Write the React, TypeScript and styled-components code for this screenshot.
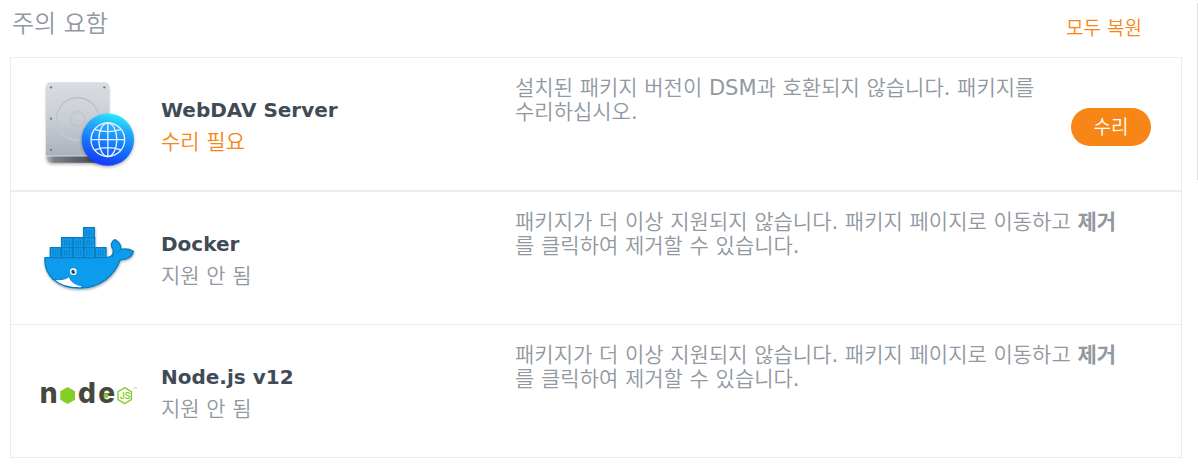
import React from "react";
import styled, { createGlobalStyle } from "styled-components";

const GlobalStyle = createGlobalStyle`
  *, *::before, *::after { box-sizing: border-box; }
  body {
    margin: 0;
    background: #fff;
    color: #91989f;
    font-family: "DejaVu Sans", "Noto Sans CJK KR DemiLight", "Noto Sans CJK KR", sans-serif;
    font-size: 21px;
    line-height: 24px;
    font-weight: 400;
  }
`;

const Page = styled.main`
  display: flex;
  align-items: flex-start;
  justify-content: space-between;
`;

const Content = styled.section`
  flex: 1;
  min-width: 0;
  padding: 8px 15px 13px 10px;
`;

const ScrollThumb = styled.div`
  flex: none;
  width: 1px;
  height: 177px;
  margin-top: 3px;
  background: #dcdfe2;
`;

const Header = styled.header`
  display: flex;
  align-items: center;
  justify-content: space-between;
  padding: 0 40px 17px 2px;
`;

const Heading = styled.h1`
  margin: 0;
  font-size: 24px;
  line-height: 32px;
  font-weight: 400;
`;

const RestoreAll = styled.button`
  margin: 7px 0 0;
  padding: 0;
  border: 0;
  background: none;
  color: #f78616;
  font-family: inherit;
  font-size: 19px;
  line-height: 24px;
  cursor: pointer;
`;

const List = styled.ul`
  margin: 0;
  padding: 0;
  list-style: none;
  border: 1px solid #e9ebec;
  border-bottom: 0;
`;

const Row = styled.li<{ $separated?: boolean }>`
  display: flex;
  gap: 24px;
  padding: 18px 30px;
  border-bottom: ${(p) => (p.$separated ? "2px solid #e8edf1" : "1px solid #e9ebec")};
`;

const IconBox = styled.div`
  flex: none;
  width: 96px;
  height: 96px;
  svg { display: block; width: 100%; height: 100%; }
`;

const Summary = styled.div`
  flex: 0 1 330px;
  min-width: 180px;
  align-self: center;
  display: flex;
  flex-direction: column;
  gap: 8px;
  padding-top: 4px;
`;

const Name = styled.h2`
  margin: 0;
  color: #414b55;
  font-size: 20px;
  line-height: 24px;
  font-weight: 700;
`;

const Status = styled.span<{ $alert?: boolean }>`
  color: ${(p) => (p.$alert ? "#f78616" : "inherit")};
`;

const Description = styled.p`
  flex: 1;
  min-width: 0;
  max-width: 620px;
  margin: 0;
`;

const Strong = styled.strong`
  font-family: "Noto Sans CJK KR", sans-serif;
  font-weight: 700;
  line-height: 1;
`;

const RepairButton = styled.button`
  flex: none;
  align-self: center;
  width: 80px;
  height: 38px;
  margin-top: 6px;
  padding: 0;
  border: 0;
  border-radius: 19px;
  background: #f78616;
  color: #fff;
  font-family: inherit;
  font-size: 19px;
  line-height: 24px;
  cursor: pointer;
`;

const WebDavIcon = () => (
  <svg viewBox="33 18 288 288" aria-hidden="true">
    <defs>
      <linearGradient id="plate" x1="0" y1="0" x2="0" y2="1">
        <stop offset="0" stopColor="#d9dde2" />
        <stop offset="0.5" stopColor="#c9ced4" />
        <stop offset="1" stopColor="#a9b1ba" />
      </linearGradient>
      <linearGradient id="edge" x1="0" y1="0" x2="1" y2="0">
        <stop offset="0" stopColor="#b4b9bf" />
        <stop offset="0.12" stopColor="#7b8086" />
        <stop offset="0.6" stopColor="#55595f" />
        <stop offset="1" stopColor="#2b2e33" />
      </linearGradient>
      <linearGradient id="ring" x1="0" y1="0" x2="0" y2="1">
        <stop offset="0" stopColor="#a4a9af" />
        <stop offset="1" stopColor="#d3d8dd" />
      </linearGradient>
      <linearGradient id="globe" x1="0.65" y1="0" x2="0.4" y2="1">
        <stop offset="0" stopColor="#25f0fd" />
        <stop offset="0.25" stopColor="#25b0fb" />
        <stop offset="0.6" stopColor="#1677fb" />
        <stop offset="1" stopColor="#1436fa" />
      </linearGradient>
      <filter id="soft" x="-20%" y="-20%" width="140%" height="140%">
        <feDropShadow dx="0" dy="4" stdDeviation="4" floodColor="#20262c" floodOpacity="0.4" />
      </filter>
    </defs>
    <rect x="50" y="40" width="186" height="238" rx="15" fill="url(#edge)" filter="url(#soft)" />
    <path d="M63 37H223Q238 37 238 52V258H48V52Q48 37 63 37Z" fill="url(#plate)" />
    <path d="M48 258H238" stroke="#d6dade" strokeWidth="3" />
    <circle cx="143" cy="147" r="64" fill="none" stroke="url(#ring)" strokeWidth="2.5" />
    <circle cx="143" cy="147" r="22" fill="none" stroke="#b3b9bf" strokeWidth="2" />
    <g fill="#7b8187">
      <circle cx="63" cy="52" r="3.5" />
      <circle cx="223" cy="52" r="3.5" />
      <circle cx="63" cy="146" r="3.5" />
      <circle cx="223" cy="146" r="3.5" />
      <circle cx="63" cy="240" r="3.5" />
    </g>
    <circle cx="233.500" cy="209" r="78.500" fill="url(#globe)" filter="url(#soft)" />
    <g fill="none" stroke="#e4f3ff" strokeWidth="4">
      <circle cx="233.500" cy="209" r="50.500" />
      <ellipse cx="233.500" cy="209" rx="27" ry="50.500" />
      <path d="M233.500 158V260M183 209H284M194 178Q233 192 273 178M194 240Q233 226 273 240" />
    </g>
  </svg>
);

const containers = [
  [159, 37],
  [93, 67], [127, 67], [160, 67],
  [59, 97], [93, 97], [127, 97], [160, 97], [194, 97],
];

const whale =
  "M45 128H222C243 128 254 119 249 103C241 91 243 80 255 74C268 82 274 92 272 103C284 101 299 102 310 109C306 126 290 135 271 134C253 181 213 219 149 219C82 219 41 181 45 128Z";

const DockerIcon = () => (
  <svg viewBox="33 -15 288 288" aria-hidden="true">
    <defs>
      <filter id="whaleShadow" x="-10%" y="-10%" width="120%" height="125%">
        <feDropShadow dx="1" dy="4" stdDeviation="3" floodColor="#000" floodOpacity="0.35" />
      </filter>
      <clipPath id="body">
        <path d={whale} />
      </clipPath>
    </defs>
    <g filter="url(#whaleShadow)">
      {containers.map(([x, y]) => (
        <g key={`${x}-${y}`}>
          <rect x={x + 2} y={y + 1} width="32" height="31" fill="#0d9bee" stroke="#0c7cbd" strokeWidth="4" />
          <path
            d={`M${x + 11} ${y + 8}v17M${x + 18} ${y + 8}v17M${x + 25} ${y + 8}v17`}
            stroke="#0c7cbd"
            strokeWidth="2.5"
          />
        </g>
      ))}
      <path d={whale} fill="#0d9bee" />
      <g clipPath="url(#body)">
        <path d="M64 191C84 196 103 194 116 186C121 199 133 211 154 214L150 224H88Z" fill="#fff" />
      </g>
      <path d="M66 192C87 196 104 194 116 186" fill="none" stroke="#0c7cbd" strokeWidth="3" />
      <path d={whale} fill="none" stroke="#0c7cbd" strokeWidth="4" strokeLinejoin="round" />
      <path d="M249 108Q253 120 247 127M272 104Q266 110 260 112" fill="none" stroke="#0c7cbd" strokeWidth="3" />
    </g>
    <circle cx="130" cy="170" r="10" fill="#fff" />
    <circle cx="130" cy="170" r="6" fill="#263b49" />
    <circle cx="133" cy="168" r="2" fill="#fff" />
  </svg>
);

const NodeIcon = () => (
  <svg viewBox="33 -66 288 288" aria-hidden="true">
    <g fill="#46483e" fontFamily="Inter, sans-serif" fontWeight="800" fontSize="84" textAnchor="middle">
      <text x="56" y="115">n</text>
      <text x="171" y="115">d</text>
      <text x="230" y="115">e</text>
    </g>
    <path d="M113 66L135 79V104L113 117L91 104V79Z" fill="#83cd29" />
    <path d="M228 84L235 88V96L228 100L221 96V88Z" fill="#83cd29" />
    <path d="M284 68L304 80V104L284 116L264 104V80Z" fill="none" stroke="#83cd29" strokeWidth="4" />
    <g fill="#83cd29" fontFamily="Inter, sans-serif" textAnchor="middle">
      <text x="285" y="102" fontSize="26" fontWeight="600">JS</text>
      <text x="316" y="72" fontSize="8">TM</text>
    </g>
  </svg>
);

const Unsupported = () => (
  <>
    패키지가 더 이상 지원되지 않습니다. 패키지 페이지로 이동하고 <Strong>제거</Strong>를 클릭하여 제거할 수 있습니다.
  </>
);

interface PackageEntry {
  name: string;
  status: string;
  icon: React.ReactNode;
  description: React.ReactNode;
  repairable?: boolean;
}

const packages: PackageEntry[] = [
  {
    name: "WebDAV Server",
    status: "수리 필요",
    icon: <WebDavIcon />,
    description: "설치된 패키지 버전이 DSM과 호환되지 않습니다. 패키지를 수리하십시오.",
    repairable: true,
  },
  { name: "Docker", status: "지원 안 됨", icon: <DockerIcon />, description: <Unsupported /> },
  { name: "Node.js v12", status: "지원 안 됨", icon: <NodeIcon />, description: <Unsupported /> },
];

export default function App() {
  return (
    <>
      <GlobalStyle />
      <Page lang="ko">
        <Content>
          <Header>
            <Heading>주의 요함</Heading>
            <RestoreAll type="button">모두 복원</RestoreAll>
          </Header>
          <List>
            {packages.map((item) => (
              <Row key={item.name} $separated={item.repairable}>
                <IconBox>{item.icon}</IconBox>
                <Summary>
                  <Name>{item.name}</Name>
                  <Status $alert={item.repairable}>{item.status}</Status>
                </Summary>
                <Description>{item.description}</Description>
                {item.repairable && <RepairButton type="button">수리</RepairButton>}
              </Row>
            ))}
          </List>
        </Content>
        <ScrollThumb />
      </Page>
    </>
  );
}
